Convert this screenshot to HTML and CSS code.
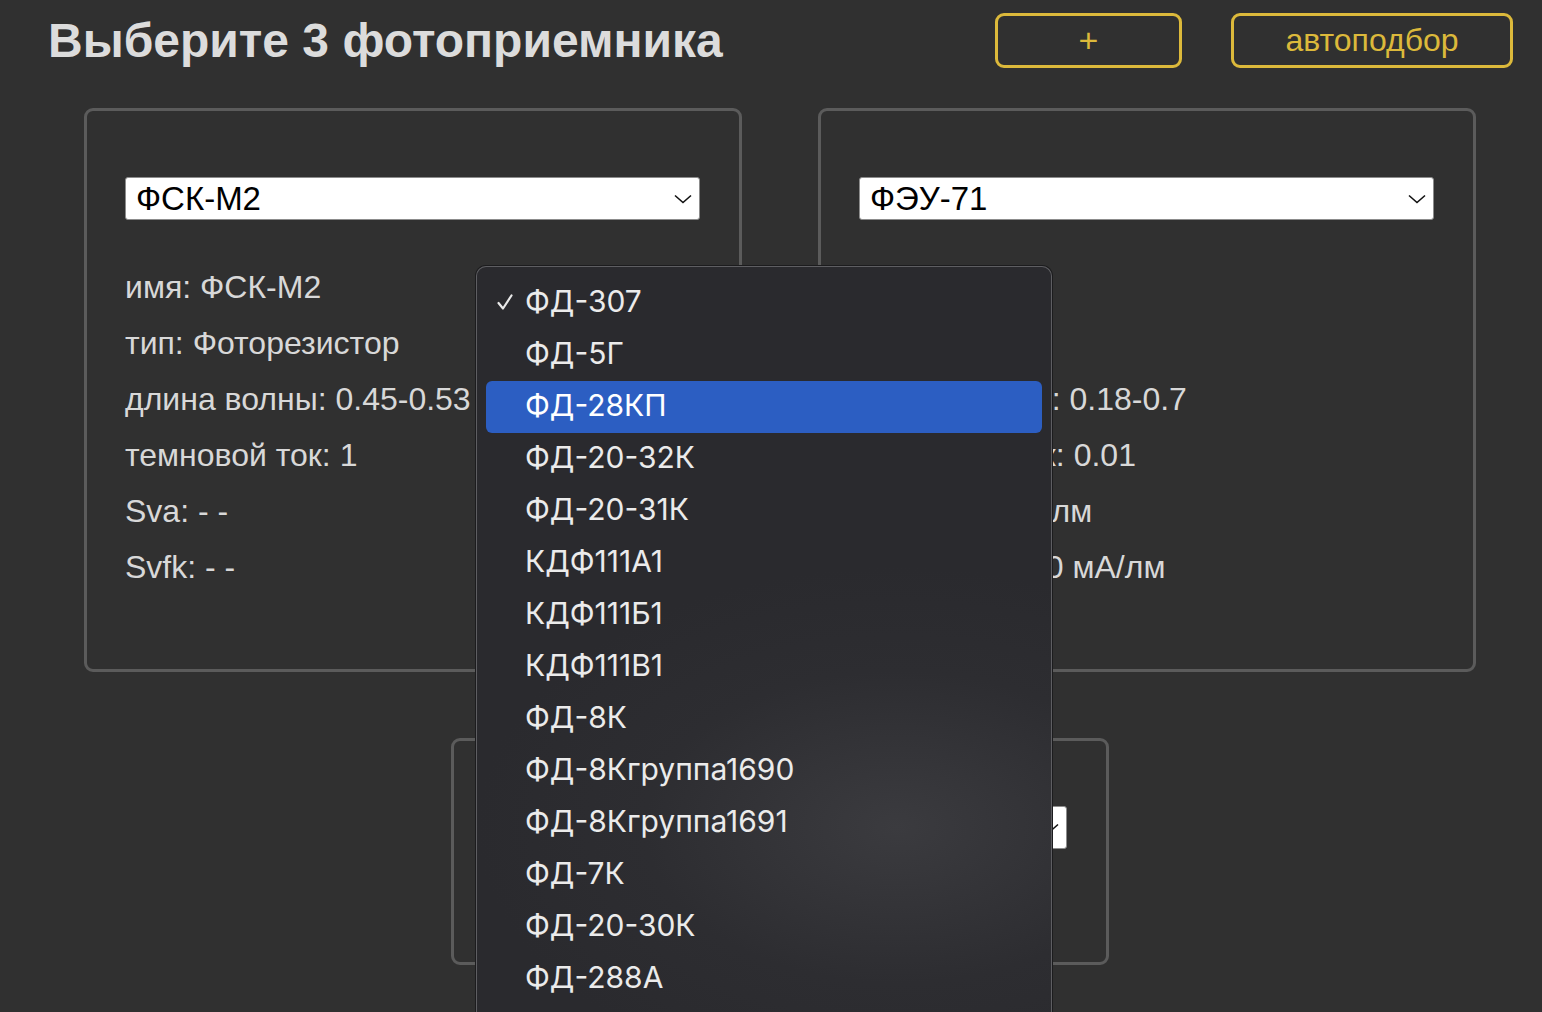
FILE: index.html
```html
<!DOCTYPE html>
<html lang="ru">
<head>
<meta charset="utf-8">
<title>Выберите 3 фотоприемника</title>
<link rel="stylesheet" href="styles.css">
</head>
<body>
<header class="header">
  <h1 class="title">Выберите 3 фотоприемника</h1>
  <button class="btn btn-add">+</button>
  <button class="btn btn-auto">автоподбор</button>
</header>
<main class="cards">
  <section class="card">
    <div class="select"><span>ФСК-М2</span><svg class="chev" width="18" height="10" viewBox="0 0 18 10"><path d="M1 1.5 L9 8.5 L17 1.5" fill="none" stroke="#111" stroke-width="1.6"/></svg></div>
    <div class="info">
      <p>имя: ФСК-М2</p>
      <p>тип: Фоторезистор</p>
      <p>длина волны: 0.45-0.53</p>
      <p>темновой ток: 1</p>
      <p>Sva: - -</p>
      <p>Svfk: - -</p>
    </div>
  </section>
  <section class="card">
    <div class="select"><span>ФЭУ-71</span><svg class="chev" width="18" height="10" viewBox="0 0 18 10"><path d="M1 1.5 L9 8.5 L17 1.5" fill="none" stroke="#111" stroke-width="1.6"/></svg></div>
    <div class="info">
      <p>имя: ФЭУ-71</p>
      <p>тип: ФЭУ</p>
      <p>длина волны: 0.18-0.7</p>
      <p>темновой ток: 0.01</p>
      <p>Sva: 1.5 мкА/лм</p>
      <p>Svfk: 1000000 мА/лм</p>
    </div>
  </section>
  <section class="card card-small">
    <div class="select"><span>ФД-307</span><svg class="chev" width="18" height="10" viewBox="0 0 18 10"><path d="M1 1.5 L9 8.5 L17 1.5" fill="none" stroke="#111" stroke-width="1.6"/></svg></div>
  </section>
</main>
<div class="menu">
  <div class="item checked"><svg class="check" width="18" height="18" viewBox="0 0 18 18"><path d="M2.5 10 L7 15.5 L15.5 2.5" fill="none" stroke="#e8e8e8" stroke-width="2.2" stroke-linecap="round" stroke-linejoin="round"/></svg>ФД-307</div>
  <div class="item">ФД-5Г</div>
  <div class="item active">ФД-28КП</div>
  <div class="item">ФД-20-32К</div>
  <div class="item">ФД-20-31К</div>
  <div class="item">КДФ111А1</div>
  <div class="item">КДФ111Б1</div>
  <div class="item">КДФ111В1</div>
  <div class="item">ФД-8К</div>
  <div class="item">ФД-8Кгруппа1690</div>
  <div class="item">ФД-8Кгруппа1691</div>
  <div class="item">ФД-7К</div>
  <div class="item">ФД-20-30К</div>
  <div class="item">ФД-288А</div>
</div>
</body>
</html>
```

FILE: styles.css
```css
html, body {
  margin: 0;
  padding: 0;
  height: 100%;
  overflow: hidden;
}
body {
  background: #303030;
  font-family: "Liberation Sans", Arial, sans-serif;
  color: #dadada;
  position: relative;
}
.header {
  display: flex;
  align-items: center;
  padding: 13px 29px 0 48px;
}
.title {
  flex: 1;
  margin: 0;
  font-size: 48px;
  line-height: 55px;
  font-weight: bold;
  color: #dcdcdc;
}
.btn {
  box-sizing: border-box;
  height: 55px;
  border: 3px solid #dcb93b;
  border-radius: 9px;
  background: transparent;
  color: #dcb93b;
  font-family: "Liberation Sans", Arial, sans-serif;
  font-size: 32px;
  padding: 0;
}
.btn-add {
  width: 187px;
  margin-right: 49px;
  font-size: 34px;
}
.btn-auto {
  width: 282px;
}
.cards {
  box-sizing: border-box;
  width: 1392px;
  margin: 40px 0 0 84px;
  display: flex;
  flex-wrap: wrap;
  justify-content: center;
  column-gap: 76px;
  row-gap: 66px;
}
.card {
  box-sizing: border-box;
  width: 658px;
  height: 564px;
  border: 3px solid #5b5b5b;
  border-radius: 9px;
  padding: 66px 39px 0 38px;
}
.card-small {
  height: 227px;
  padding-top: 65px;
}
.select {
  box-sizing: border-box;
  height: 43px;
  background: #fff;
  border: 1px solid #8c8c8c;
  border-radius: 3px;
  display: flex;
  align-items: center;
  justify-content: space-between;
  padding: 0 7px 0 10px;
  color: #000;
  font-size: 33px;
}
.info {
  margin-top: 39px;
}
.info p {
  margin: 0;
  font-size: 32px;
  line-height: 56px;
  color: #d8d8d8;
  white-space: nowrap;
}
.menu {
  position: absolute;
  left: 476px;
  top: 266px;
  width: 576px;
  height: 746px;
  box-sizing: border-box;
  border: 1px solid #5e5e62;
  border-bottom: 0;
  border-radius: 10px 10px 0 0;
  box-shadow: 0 0 0 1px #1c1c1e;
  padding: 10px 9px 0;
  background: radial-gradient(ellipse 420px 260px at 420px 560px, #3b3b3f 0%, #2d2d31 60%, #2a2a2e 100%);
  font-family: "Inter", "Liberation Sans", sans-serif;
  color: #ebebeb;
  overflow: hidden;
}
.item {
  position: relative;
  height: 52px;
  line-height: 49px;
  padding-left: 39px;
  font-size: 30px;
  border-radius: 6px;
  white-space: nowrap;
}
.item.active {
  background: #2c5ec2;
  color: #fff;
}
.check {
  position: absolute;
  left: 10px;
  top: 16px;
}
```
